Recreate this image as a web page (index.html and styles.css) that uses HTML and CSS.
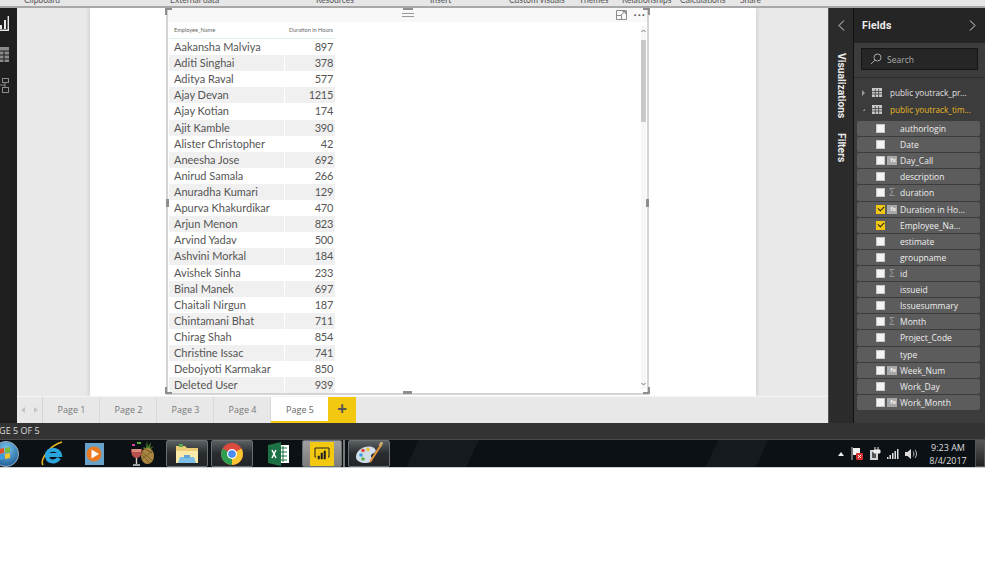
FILE: index.html
```html
<!DOCTYPE html>
<html lang="en">
<head>
<meta charset="utf-8">
<title>Power BI Desktop</title>
<link rel="stylesheet" href="styles.css">
</head>
<body>
<div class="app">
  <div class="ribbon">
    <div class="ribbon-labels">
      <span class="rg rg-1">Clipboard</span>
      <span class="rg rg-2">External data</span>
      <span class="rg rg-3">Resources</span>
      <span class="rg rg-4">Insert</span>
      <span class="rg rg-5">Custom visuals</span>
      <span class="rg rg-6">Themes</span>
      <span class="rg rg-7">Relationships</span>
      <span class="rg rg-8">Calculations</span>
      <span class="rg rg-9">Share</span>
    </div>
  </div>

  <div class="workspace">
    <nav class="rail">
      <svg class="rail-icon" width="9" height="15" viewBox="0 0 9 15"><path d="M8.300 0v14.300H0" fill="none" stroke="#e8e8e8" stroke-width="1.400"/><path d="M0 13V9h2v4zM4 13V4h2v9z" fill="#e8e8e8"/></svg>
      <svg class="rail-icon" width="9" height="15" viewBox="0 0 9 15"><path d="M0 0h9v15H0z" fill="#8a8a8a"/><path d="M0 4h9M0 8h9M0 12h9M4 4v11" stroke="#1f1f1f"/></svg>
      <svg class="rail-icon" width="9" height="15" viewBox="0 0 9 15" fill="none" stroke="#8a8a8a"><rect x="2.500" y=".5" width="6" height="4"/><rect x="2.500" y="9.500" width="6" height="5"/><path d="M0 7h5M5 4v6"/></svg>
    </nav>

    <div class="center">
      <main class="canvas">
        <section class="page">
          <div class="visual">
            <div class="visual-head">
              <span class="grip"></span>
              <svg class="focus" width="11" height="10" viewBox="0 0 11 10" fill="none" stroke="#8c8c8c"><path d="M.5.5h10v9H.5z"/><path d="M.5 5.500h5v4M5 5l4-3.500M6.500 1.500H9.500V4"/></svg>
              <span class="more">&#183;&#183;&#183;</span>
            </div>
            <div class="visual-body">
              <table class="grid">
                <thead><tr><th class="name">Employee_Name</th><th class="num">Duration in Hours</th></tr></thead>
                <tbody>
                  <tr><td class="name">Aakansha Malviya</td><td class="num">897</td></tr>
                  <tr><td class="name">Aditi Singhai</td><td class="num">378</td></tr>
                  <tr><td class="name">Aditya Raval</td><td class="num">577</td></tr>
                  <tr><td class="name">Ajay Devan</td><td class="num">1215</td></tr>
                  <tr><td class="name">Ajay Kotian</td><td class="num">174</td></tr>
                  <tr><td class="name">Ajit Kamble</td><td class="num">390</td></tr>
                  <tr><td class="name">Alister Christopher</td><td class="num">42</td></tr>
                  <tr><td class="name">Aneesha Jose</td><td class="num">692</td></tr>
                  <tr><td class="name">Anirud Samala</td><td class="num">266</td></tr>
                  <tr><td class="name">Anuradha Kumari</td><td class="num">129</td></tr>
                  <tr><td class="name">Apurva Khakurdikar</td><td class="num">470</td></tr>
                  <tr><td class="name">Arjun Menon</td><td class="num">823</td></tr>
                  <tr><td class="name">Arvind Yadav</td><td class="num">500</td></tr>
                  <tr><td class="name">Ashvini Morkal</td><td class="num">184</td></tr>
                  <tr><td class="name">Avishek Sinha</td><td class="num">233</td></tr>
                  <tr><td class="name">Binal Manek</td><td class="num">697</td></tr>
                  <tr><td class="name">Chaitali Nirgun</td><td class="num">187</td></tr>
                  <tr><td class="name">Chintamani Bhat</td><td class="num">711</td></tr>
                  <tr><td class="name">Chirag Shah</td><td class="num">854</td></tr>
                  <tr><td class="name">Christine Issac</td><td class="num">741</td></tr>
                  <tr><td class="name">Debojyoti Karmakar</td><td class="num">850</td></tr>
                  <tr><td class="name">Deleted User</td><td class="num">939</td></tr>
                </tbody>
              </table>
              <div class="scroll">
                <svg class="arrow" width="5" height="4" viewBox="0 0 5 4" fill="none" stroke="#777"><path d="M.5 3 2.500 1 4.500 3"/></svg>
                <span class="thumb"></span>
                <svg class="arrow arrow-down" width="5" height="4" viewBox="0 0 5 4" fill="none" stroke="#777"><path d="M.5 1 2.500 3 4.500 1"/></svg>
              </div>
            </div>
            <span class="h h-tl"></span><span class="h h-tm"></span><span class="h h-tr"></span>
            <span class="h h-ml"></span><span class="h h-mr"></span>
            <span class="h h-bl"></span><span class="h h-bm"></span><span class="h h-br"></span>
          </div>
        </section>
      </main>
      <div class="tabs">
        <div class="tab-nav"><span class="tri tri-l"></span><span class="tri tri-r"></span></div>
        <span class="tab">Page 1</span>
        <span class="tab">Page 2</span>
        <span class="tab">Page 3</span>
        <span class="tab">Page 4</span>
        <span class="tab tab-on">Page 5</span>
        <span class="tab-add">+</span>
      </div>
    </div>

    <aside class="side">
      <div class="side-tabs">
        <svg class="chev" width="7" height="11" viewBox="0 0 7 11" fill="none" stroke="#d8d8d8"><path d="M6 .5 1 5.500 6 10.500"/></svg>
        <span class="vtext vtext-a">Visualizations</span>
        <span class="vtext vtext-b">Filters</span>
      </div>
      <div class="fields">
        <header class="fields-head">
          <span class="fields-title">Fields</span>
          <svg width="7" height="11" viewBox="0 0 7 11" fill="none" stroke="#d8d8d8"><path d="M1 .5 6 5.500 1 10.500"/></svg>
        </header>
        <div class="search">
          <svg width="12" height="12" viewBox="0 0 12 12" fill="none" stroke="#aaa"><circle cx="7.500" cy="4.500" r="3.500"/><path d="M5 7 1 11"/></svg>
          <span>Search</span>
        </div>
        <div class="tree">
          <div class="tbl"><span class="tri-e"></span><svg class="tbl-ic" width="10" height="9" viewBox="0 0 10 9"><path d="M0 0h10v9H0z" fill="#c9c9c9"/><path d="M0 3.500h10M0 6h10M3.300 1v8M6.600 1v8" stroke="#3f3f3f" stroke-width=".8"/></svg><span>public youtrack_pr...</span></div>
          <div class="tbl tbl-on"><span class="tri-o"></span><svg class="tbl-ic" width="10" height="9" viewBox="0 0 10 9"><path d="M0 0h10v9H0z" fill="#c9c9c9"/><path d="M0 3.500h10M0 6h10M3.300 1v8M6.600 1v8" stroke="#3f3f3f" stroke-width=".8"/></svg><span>public youtrack_tim...</span></div>
          <ul class="list">
            <li class="f"><i class="cb"></i><i class="ty"></i><span>authorlogin</span></li>
            <li class="f"><i class="cb"></i><i class="ty"></i><span>Date</span></li>
            <li class="f"><i class="cb"></i><i class="ty ty-fx">fx</i><span>Day_Call</span></li>
            <li class="f"><i class="cb"></i><i class="ty"></i><span>description</span></li>
            <li class="f"><i class="cb"></i><i class="ty ty-s">&#931;</i><span>duration</span></li>
            <li class="f"><i class="cb cb-on"></i><i class="ty ty-fx">fx</i><span>Duration in Ho...</span></li>
            <li class="f"><i class="cb cb-on"></i><i class="ty"></i><span>Employee_Na...</span></li>
            <li class="f"><i class="cb"></i><i class="ty"></i><span>estimate</span></li>
            <li class="f"><i class="cb"></i><i class="ty"></i><span>groupname</span></li>
            <li class="f"><i class="cb"></i><i class="ty ty-s">&#931;</i><span>id</span></li>
            <li class="f"><i class="cb"></i><i class="ty"></i><span>issueid</span></li>
            <li class="f"><i class="cb"></i><i class="ty"></i><span>Issuesummary</span></li>
            <li class="f"><i class="cb"></i><i class="ty ty-s">&#931;</i><span>Month</span></li>
            <li class="f"><i class="cb"></i><i class="ty"></i><span>Project_Code</span></li>
            <li class="f"><i class="cb"></i><i class="ty"></i><span>type</span></li>
            <li class="f"><i class="cb"></i><i class="ty ty-fx">fx</i><span>Week_Num</span></li>
            <li class="f"><i class="cb"></i><i class="ty"></i><span>Work_Day</span></li>
            <li class="f"><i class="cb"></i><i class="ty ty-fx">fx</i><span>Work_Month</span></li>
          </ul>
        </div>
      </div>
    </aside>
  </div>

  <div class="status"><span>PAGE 5 OF 5</span></div>

  <div class="taskbar">
    <svg class="tb tb-start" width="24" height="26" viewBox="0 0 24 26"><defs><radialGradient id="orb" cx=".5" cy=".3" r=".8"><stop offset="0" stop-color="#7ec6ee"/><stop offset="1" stop-color="#0d4f8c"/></radialGradient></defs><circle cx="11" cy="13" r="12.500" fill="url(#orb)" stroke="#9fb4c6"/><path d="M4 8l5-1v5l-5 1z" fill="#e2512b"/><path d="M10 7l5-1v5l-5 1z" fill="#7dbb3b"/><path d="M4 14l5-1v5l-5 1z" fill="#3d9be0"/><path d="M10 13l5-1v5l-5 1z" fill="#f4c531"/></svg>
    <svg class="tb tb-ie" width="23" height="26" viewBox="0 0 23 26"><path d="M3 24C0 20 8 5 22 1" fill="none" stroke="#e8b421" stroke-width="1.600"/><path d="M20 14H7c0-7 12-7 13 0zM7 14c0 8 9 8 12 3" fill="none" stroke="#2aa5e0" stroke-width="4"/></svg>
    <svg class="tb tb-wmp" width="20" height="24" viewBox="0 0 20 24"><path d="M0 1h19v22H0z" fill="#6aa3c9"/><circle cx="9" cy="12" r="7.500" fill="#ea7a22"/><path d="M6.500 7.500 14 12l-7.500 4.500z" fill="#fff"/></svg>
    <svg class="tb tb-pine" width="25" height="26" viewBox="0 0 25 26"><path d="M17 0l1 6 3-5-1 6 4-2-4 4h-5l-2-3 3 1z" fill="#4c7f2c"/><ellipse cx="17.500" cy="15" rx="6.500" ry="8" fill="#a98740"/><path d="M12 11l11 9M12 18l10-8M13 7l9 5M12 14l8 8" stroke="#6f5522" stroke-width=".8"/><path d="M1 8h11c0 7-3 9-5.500 9S1 15 1 8z" fill="#b9514c"/><path d="M2 8h9v3H2z" fill="#d98b7d"/><path d="M6.500 17v6M3 24h7" stroke="#cfcfcf" stroke-width="1.400"/><path d="M2 3h3v2H2z" fill="#d43d9c"/><path d="M7 1h4v2H7z" fill="#55a939"/></svg>
    <div class="tb tb-btn tb-explorer"><svg width="24" height="22" viewBox="0 0 24 22"><path d="M1 3h9l2 2h11v15H1z" fill="#eccd77"/><path d="M1 8h22v12H1z" fill="#fbe9a9"/><path d="M5 14h14l2 6H3z" fill="#7ebde6"/><path d="M9 12h6v3H9z" fill="#5fa6d6"/><path d="M4 1h4v3H4z" fill="#56a94b"/></svg></div>
    <div class="tb tb-btn tb-chrome"><svg width="22" height="22" viewBox="0 0 22 22"><circle cx="11" cy="11" r="11" fill="#dd4b3e"/><path d="M11 11 20.500 5.500A11 11 0 0 1 11 22z" fill="#f7c631"/><path d="M11 11 11 22A11 11 0 0 1 1.500 5.500z" fill="#2f9e4f"/><circle cx="11" cy="11" r="5" fill="#fff"/><circle cx="11" cy="11" r="3.800" fill="#4a8bf0"/></svg></div>
    <svg class="tb tb-excel" width="22" height="24" viewBox="0 0 22 24"><path d="M10 3h11v18H10z" fill="#fff"/><path d="M12 6h7M12 10h7M12 14h7M12 18h7M15 4v16" stroke="#1e7145"/><path d="M0 3 13 0v24L0 21z" fill="#1e7145"/><path d="M4 8l4 8M8 8l-4 8" stroke="#fff" stroke-width="1.500"/></svg>
    <div class="tb tb-btn tb-pbi"><span class="pbi"><svg width="16" height="14" viewBox="0 0 16 14" fill="none"><path d="M2 10H1V1h14v9h-1" stroke="#222"/><path d="M4 12V9h1.500v3zM7 12V6h1.500v6zM10 12V4h1.500v8z" fill="#222" stroke="#222" stroke-width=".6"/></svg></span></div>
    <span class="tb tb-sliver"></span>
    <div class="tb tb-btn tb-paint"><svg width="30" height="24" viewBox="0 0 30 24"><path d="M2 15C2 8 11 3 18 5c4 1 5 5 2 6-3 1-4 3-2 5 1 2-1 5-6 5C7 21 2 19 2 15z" fill="#cfdde9"/><circle cx="7" cy="13" r="1.800" fill="#3a9be0"/><circle cx="9" cy="8.500" r="1.800" fill="#d84b3d"/><circle cx="14" cy="7.500" r="1.800" fill="#e8c22f"/><circle cx="9" cy="17" r="1.800" fill="#5fae3f"/><path d="M16 20 27 3" stroke="#e69538" stroke-width="2"/><path d="M26 4 28 0" stroke="#c9a774" stroke-width="3"/></svg></div>

    <div class="tray">
      <span class="tray-up"></span>
      <svg width="12" height="13" viewBox="0 0 12 13"><path d="M1 0v13" stroke="#ccc"/><path d="M2 1h7v7H2z" fill="#f3f3f3"/><rect x="5" y="6" width="7" height="7" rx="1" fill="#d32f2f"/><path d="M7 8l3 3M10 8l-3 3" stroke="#fff"/></svg>
      <svg width="12" height="14" viewBox="0 0 12 14"><path d="M1 3h8v10H1z" fill="#d5d5d5"/><path d="M3 5h4v6H3z" fill="#555"/><path d="M6 3V0M9 3V0M5 3h6v3H5z" stroke="#eee" fill="#eee"/></svg>
      <svg width="12" height="10" viewBox="0 0 12 10" fill="#ddd"><path d="M0 8h1.500v2H0zM2.500 6H4v4H2.500zM5 4h1.500v6H5zM7.500 2H9v8H7.500zM10 0h1.500v10H10z"/></svg>
      <svg width="12" height="12" viewBox="0 0 12 12"><path d="M0 4h2.500L6 1v10L2.500 8H0z" fill="#dcdcdc"/><path d="M8 3.500c1.200 1.500 1.200 3.500 0 5M10 2c2 2.500 2 5.500 0 8" fill="none" stroke="#bbb"/></svg>
      <div class="clock"><span>9:23 AM</span><span>8/4/2017</span></div>
      <span class="show-desktop"></span>
    </div>
  </div>
</div>
</body>
</html>
```
FILE: styles.css
```css
* { box-sizing: border-box; }
html, body { margin: 0; padding: 0; background: #fff; overflow: hidden; }
body { width: 999px; height: 562px; font-family: "Open Sans", "Liberation Sans", sans-serif; }
.app { width: 985px; height: 468px; display: flex; flex-direction: column; overflow: hidden; }

.ribbon { height: 8px; flex: none; background: #e6e6e6; border-bottom: 2px solid #a8a8a8; overflow: hidden; }
.ribbon-labels { display: flex; margin-top: -6px; padding-left: 24px; font-family: Lato, "Open Sans", sans-serif; font-size: 8.5px; line-height: 12px; color: #555; white-space: nowrap; }
.rg { display: block; flex: none; }
.rg-1 { width: 146px; }
.rg-2 { width: 146px; }
.rg-3 { width: 114px; }
.rg-4 { width: 79px; }
.rg-5 { width: 70px; }
.rg-6 { width: 43px; }
.rg-7 { width: 58px; }
.rg-8 { width: 60px; }

.workspace { height: 415px; flex: none; display: flex; }
.rail { width: 17px; flex: none; background: #1f1f1f; display: flex; flex-direction: column; gap: 16px; padding-top: 8px; }
.rail-icon { display: block; }

.center { width: 811px; flex: none; display: flex; flex-direction: column; }
.canvas { height: 388px; flex: none; background: #e9e9e9; padding: 0 72px 0 73px; overflow: hidden; }
.page { height: 388px; background: #fff; box-shadow: 0 0 5px rgba(0,0,0,.18); padding: 0 107px 0 76px; }
.visual { position: relative; height: 387px; border: 1px solid #d4d4d4; border-width: 0 2px 2px 2px; display: flex; flex-direction: column; }
.visual-head { height: 14px; flex: none; background: #f8f8f8; display: flex; align-items: center; justify-content: flex-end; gap: 7px; padding-right: 1px; position: relative; }
.grip { position: absolute; left: 234px; top: 5px; width: 12px; height: 4px; border-top: 1px solid #999; border-bottom: 1px solid #999; }
.more { font-size: 11px; line-height: 10px; letter-spacing: 1px; color: #555; font-weight: 700; }
.focus { display: block; }
.visual-body { flex: 1; display: flex; justify-content: space-between; padding-left: 1px; min-height: 0; }

.grid { width: 166px; flex: none; border-collapse: separate; border-spacing: 0; table-layout: fixed; align-self: flex-start; font-family: Lato, "Open Sans", sans-serif; }
.grid th { font-size: 5.6px; font-weight: 400; color: #666; height: 17px; padding: 0 2px 0 5px; border-bottom: 1px solid #dff0f2; line-height: 8px; white-space: nowrap; }
.grid th.name { width: 115px; text-align: left; }
.grid th.num { text-align: right; padding-left: 0; }
.grid td { font-size: 11px; line-height: 16px; height: 16.12px; padding: 0 2px 0 5px; color: #555; white-space: nowrap; }
.grid td.name { width: 115px; text-align: left; }
.grid td.num { text-align: right; border-left: 1px solid #fff; letter-spacing: -.3px; }
.grid tbody tr:nth-child(even) td { background: #f0f0f0; }

.scroll { width: 5px; margin: 4px 1px 4px 0; flex: none; display: flex; flex-direction: column; align-items: center; background: #f6f6f6; }
.arrow { display: block; margin-top: 3px; }
.arrow-down { margin-top: auto; margin-bottom: 3px; }
.thumb { display: block; width: 5px; height: 82px; margin-top: 7px; background: #c9c9c9; }

.h { position: absolute; background: #8e8e8e; }
.h-tl { left: -3px; top: 0; width: 7px; height: 7px; clip-path: polygon(0 0,100% 0,100% 30%,30% 30%,30% 100%,0 100%); }
.h-tr { right: -3px; top: 0; width: 7px; height: 7px; clip-path: polygon(0 0,100% 0,100% 100%,70% 100%,70% 30%,0 30%); }
.h-bl { left: -3px; bottom: -1px; width: 7px; height: 7px; clip-path: polygon(0 0,30% 0,30% 70%,100% 70%,100% 100%,0 100%); }
.h-br { right: -3px; bottom: -1px; width: 7px; height: 7px; clip-path: polygon(70% 0,100% 0,100% 100%,0 100%,0 70%,70% 70%); }
.h-tm { left: 235px; top: 0; width: 10px; height: 2px; }
.h-bm { left: 235px; bottom: -1px; width: 9px; height: 3px; }
.h-ml { left: -2px; top: 191px; width: 3px; height: 8px; }
.h-mr { right: -2px; top: 191px; width: 3px; height: 8px; }

.tabs { height: 27px; flex: none; background: #e8e8e8; display: flex; border-top: 1px solid #f4f4f4; }
.tab-nav { width: 26px; flex: none; display: flex; align-items: center; justify-content: center; gap: 9px; border-right: 1px solid #d4d4d4; }
.tri { width: 0; height: 0; border-top: 3px solid transparent; border-bottom: 3px solid transparent; }
.tri-l { border-right: 4px solid #c4c4c4; }
.tri-r { border-left: 4px solid #c4c4c4; }
.tab { width: 57px; flex: none; padding-left: 1px; text-align: center; font-size: 9px; line-height: 26px; color: #777; border-right: 1px solid #d9d9d9; }
.tab-on { background: #fff; color: #666; border-right: 0; border-bottom: 2px solid #f2c811; }
.tab-add { width: 28px; flex: none; background: #f2c811; color: #555; font-size: 17px; font-weight: 700; line-height: 23px; text-align: center; }

.side { width: 157px; flex: none; display: flex; background: #3c3c3c; }
.side-tabs { width: 26px; flex: none; background: #2b2b2b; display: flex; flex-direction: column; align-items: center; padding-top: 12px; border-left: 1px solid #555; border-right: 1px solid #111; }
.chev { display: block; }
.vtext { writing-mode: vertical-rl; font-family: Roboto, "Liberation Sans", sans-serif; font-weight: 700; font-size: 10.3px; line-height: 12px; color: #e8e8e8; }
.vtext-a { margin-top: 22px; }
.vtext-b { margin-top: 15px; }
.fields { flex: 1; min-width: 0; background: #3c3c3c; display: flex; flex-direction: column; }
.fields-head { height: 35px; flex: none; background: #252525; display: flex; align-items: center; justify-content: space-between; padding: 0 9px 0 8px; }
.fields-title { font-family: Roboto, "Liberation Sans", sans-serif; font-size: 10.5px; font-weight: 700; color: #eee; letter-spacing: .2px; }
.search { height: 22px; margin: 5px 7px 0; flex: none; background: #262626; border: 1px solid #151515; display: flex; align-items: center; gap: 5px; padding-left: 8px; font-size: 8.5px; color: #aaa; }
.tree { flex: 1; margin-top: 7px; border-top: 1px solid #2c2c2c; padding-top: 6px; }
.tbl { height: 17px; display: flex; align-items: center; padding-left: 8px; font-size: 8.2px; color: #e2e2e2; white-space: nowrap; }
.tbl-ic { display: block; margin-left: 7px; margin-right: 8px; flex: none; }
.tbl-on { color: #e8b923; }
.tri-e { width: 0; height: 0; border-top: 3px solid transparent; border-bottom: 3px solid transparent; border-left: 3px solid #999; }
.tri-o { width: 3px; height: 3px; background: linear-gradient(135deg, transparent 50%, #888 50%); }
.list { list-style: none; margin: 3px 0 0; padding: 0 5px 0 3px; display: flex; flex-direction: column; gap: 1px; }
.f { height: 15.12px; background: #5c5c5c; border-radius: 2px; display: flex; align-items: center; font-size: 8.5px; color: #eee; white-space: nowrap; padding-left: 19px; }
.cb { display: block; width: 9px; height: 9px; flex: none; background: #f4f4f4; border: 1px solid #c8c8c8; }
.cb-on { background: #f2c811; border-color: #f2c811; position: relative; }
.cb-on::after { content: ""; position: absolute; left: 1px; top: 0; width: 5px; height: 3px; border-left: 1.400px solid #222; border-bottom: 1.400px solid #222; transform: rotate(-45deg); }
.ty { display: block; width: 10px; height: 9px; flex: none; margin: 0 3px 0 2px; font-style: normal; }
.ty-fx { background: #a8a8a8; font-size: 6px; line-height: 9px; font-weight: 700; text-align: right; padding-right: 1px; color: #f2f2f2; overflow: hidden; }
.ty-s { font-size: 10px; line-height: 9px; color: #a0a0a0; text-align: center; }

.status { height: 17px; flex: none; background: #333; overflow: hidden; border-bottom: 1px solid #4a4a4a; }
.status span { display: block; margin-left: -12px; font-size: 9px; line-height: 15px; color: #ddd; white-space: nowrap; }

.taskbar { height: 28px; flex: none; display: flex; align-items: center; border-bottom: 1px solid #c8d0d6; overflow: hidden;
  background:
    linear-gradient(115deg, transparent 0 42%, rgba(255,255,255,.04) 42% 48%, transparent 48% 72%, rgba(255,255,255,.04) 72% 77%, transparent 77%),
    #0c1115; }
.tb { display: block; flex: none; }
.tb-start { margin-left: -5px; }
.tb-ie { margin-left: 21px; }
.tb-wmp { margin-left: 22px; }
.tb-pine { margin-left: 25px; }
.tb-btn { height: 27px; width: 42px; display: flex; align-items: center; justify-content: center; border: 1px solid #6a6f72; border-radius: 2px; background: linear-gradient(#5a5f62, #2a2d30 50%, #232528); }
.tb-explorer { margin-left: 11px; }
.tb-chrome { margin-left: 3px; }
.tb-excel { margin-left: 15px; }
.tb-pbi { margin-left: 12px; width: 40px; background: linear-gradient(#a0a0a0, #7c7c7c); }
.pbi { width: 24px; height: 24px; background: #f2c811; display: flex; align-items: center; justify-content: center; }
.tb-sliver { width: 2px; height: 27px; margin-left: 1px; background: #777; }
.tb-paint { margin-left: 3px; }
.tray { margin-left: auto; display: flex; align-items: center; gap: 6px; }
.tray-up { width: 0; height: 0; margin-right: 1px; border-left: 3px solid transparent; border-right: 3px solid transparent; border-bottom: 4px solid #eee; }
.clock { display: flex; flex-direction: column; align-items: center; width: 36px; margin-left: 7px; font-size: 9px; line-height: 13px; color: #ddd; white-space: nowrap; }
.show-desktop { width: 10px; height: 27px; margin-left: 3px; background: linear-gradient(#555, #222); border: 1px solid #555; }
```
